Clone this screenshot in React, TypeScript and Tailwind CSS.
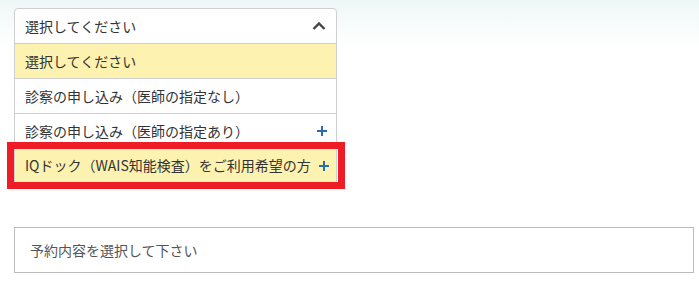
const options = [
  { label: "選択してください", active: true, plus: false },
  { label: "診察の申し込み（医師の指定なし）", active: false, plus: false },
  { label: "診察の申し込み（医師の指定あり）", active: false, plus: true },
];

const PlusMark = () => (
  <svg width="12" height="12" viewBox="0 0 12 12" className="text-[#2b6cb8]">
    <path d="M6 1v10M1 6h10" stroke="currentColor" strokeWidth="2" />
  </svg>
);

export default function App() {
  return (
    <div
      className="relative w-[699px] h-[293px] overflow-hidden bg-[linear-gradient(to_bottom,#eef8f6_0px,#ffffff_48px)]"
      style={{ fontFamily: '"Noto Sans CJK JP", "Noto Sans", sans-serif' }}
    >
      <div className="pt-2 pl-[14px]">
        <div className="w-[323px] rounded-t-[4px] border border-[#cfcfcf] bg-white text-[14px] text-[#333]">
          <div className="flex h-[35px] items-center justify-between border-b border-[#cfcfcf] pl-[10px] pr-[9px]">
            <span>選択してください</span>
            <svg width="14" height="10" viewBox="0 0 14 10" className="mr-[1px] text-[#444]">
              <path d="M1.5 8 7 2.5 12.5 8" fill="none" stroke="currentColor" strokeWidth="2.4" />
            </svg>
          </div>
          {options.map((o) => (
            <div
              key={o.label}
              className={`flex h-[35px] items-center justify-between border-b border-[#cfcfcf] pl-[10px] pr-[8px] ${
                o.active ? "bg-[#fdf2b0]" : "bg-white"
              }`}
            >
              <span>{o.label}</span>
              {o.plus && <PlusMark />}
            </div>
          ))}
          <div className="relative flex h-[33px] items-center justify-between bg-[#fdf2b0] pl-[10px] pr-[6px]">
            <span className="whitespace-nowrap">IQドック（WAIS知能検査）をご利用希望の方</span>
            <PlusMark />
            <div className="pointer-events-none absolute -left-[8px] -right-[9px] -top-[7px] -bottom-[7px] border-[7px] border-[#ee1c25]" />
          </div>
        </div>
      </div>
      <div className="absolute left-[14px] top-[227px] flex h-[46px] w-[680px] items-center border border-[#bbbbbb] bg-white pl-[15px] text-[14px] text-[#555]">
        予約内容を選択して下さい
      </div>
    </div>
  );
}
